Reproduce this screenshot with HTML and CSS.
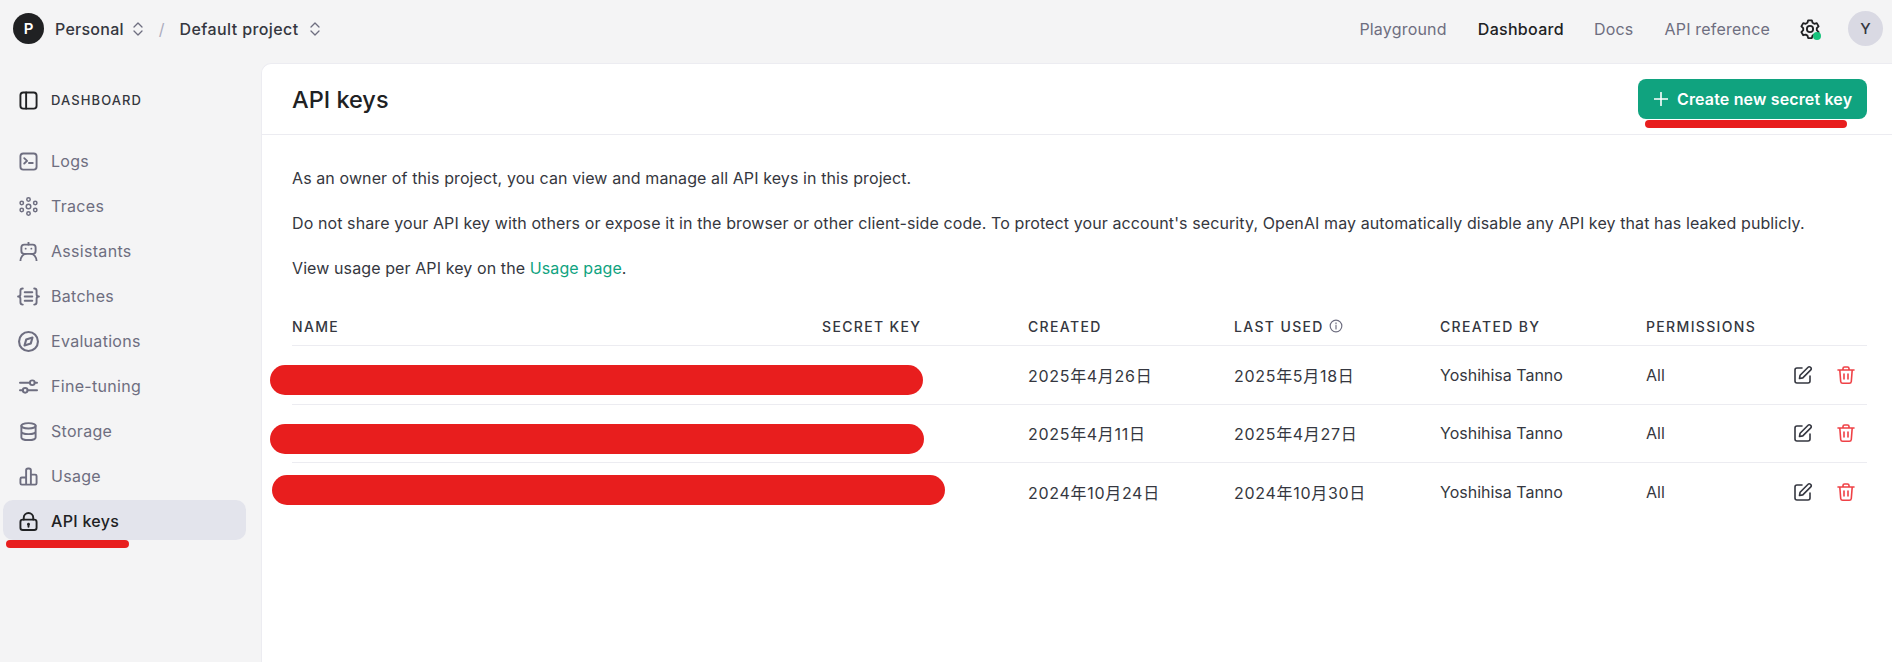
FILE: index.html
```html
<!DOCTYPE html>
<html lang="ja">
<head>
<meta charset="utf-8">
<title>API keys</title>
<link rel="stylesheet" href="styles.css">
</head>
<body>
<header class="topbar">
  <div class="crumbs">
    <span class="org-badge">P</span>
    <span class="crumb crumb-org">Personal</span>
    <svg class="updown" viewBox="0 0 12 18"><path d="M2 7l4-4 4 4M2 11l4 4 4-4"/></svg>
    <span class="slash">/</span>
    <span class="crumb">Default project</span>
    <svg class="updown" viewBox="0 0 12 18"><path d="M2 7l4-4 4 4M2 11l4 4 4-4"/></svg>
  </div>
  <nav class="topnav">
    <a class="toplink">Playground</a>
    <a class="toplink toplink-active">Dashboard</a>
    <a class="toplink">Docs</a>
    <a class="toplink">API reference</a>
    <span class="gear">
      <svg viewBox="0 0 24 24" class="gear-icon"><path d="M10 2.500h4l.8 2.700 1.900 1.100 2.700-.7 2 3.500-2 2v2.200l2 2-2 3.500-2.700-.7-1.900 1.100-.8 2.700h-4l-.8-2.700-1.900-1.100-2.700.7-2-3.500 2-2v-2.200l-2-2 2-3.500 2.700.7 1.900-1.100z"/><circle cx="12" cy="12" r="3.400"/></svg>
      <span class="gear-dot"></span>
    </span>
    <span class="user-badge">Y</span>
  </nav>
</header>
<div class="shell">
  <aside class="sidebar">
    <div class="side-title">
      <svg class="side-icon dark" viewBox="0 0 20 20"><rect x="1.500" y="1.500" width="17" height="17" rx="3"/><path d="M7.500 1.500v17"/></svg>
      <span>DASHBOARD</span>
    </div>
    <ul class="side-list">
      <li class="side-item"><svg class="side-icon" viewBox="0 0 20 20"><rect x="1.500" y="1.500" width="17" height="17" rx="3"/><path d="M5.500 6.500l3 2.800-3 2.800M10.500 11.500h4"/></svg>Logs</li>
      <li class="side-item"><svg class="side-icon thin" viewBox="0 0 20 20"><circle cx="10" cy="10" r="2.400"/><circle cx="10" cy="2.600" r="1.800"/><circle cx="10" cy="17.400" r="1.800"/><circle cx="2.900" cy="6.300" r="1.800"/><circle cx="17.100" cy="6.300" r="1.800"/><circle cx="2.900" cy="13.700" r="1.800"/><circle cx="17.100" cy="13.700" r="1.800"/></svg>Traces</li>
      <li class="side-item"><svg class="side-icon" viewBox="0 0 20 20"><rect x="2.500" y="2.800" width="15" height="9.700" rx="3"/><path d="M10 .5v2.300M1.500 20c0-4 3-7.500 5.500-7.500M18.500 20c0-4-3-7.500-5.500-7.500"/><circle class="solid" cx="7" cy="7" r="1"/><circle class="solid" cx="13" cy="7" r="1"/></svg>Assistants</li>
      <li class="side-item"><svg class="side-icon wide" viewBox="0 0 24 20"><path d="M6 1.500c-2 0-2.500 1-2.500 2.500v3.500c0 1.500-.8 2.500-2.500 2.500 1.700 0 2.500 1 2.500 2.500V16c0 1.500.5 2.500 2.500 2.500M18 1.500c2 0 2.500 1 2.500 2.500v3.500c0 1.500.8 2.500 2.500 2.500-1.700 0-2.500 1-2.500 2.500V16c0 1.500-.5 2.500-2.500 2.500M8 5.500h8M8 10h8M8 14.500h8"/></svg>Batches</li>
      <li class="side-item"><svg class="side-icon big" viewBox="0 0 20 20"><circle cx="10" cy="10" r="9"/><path d="M13.800 6.200l-1.600 5.600-6 2 1.600-5.600z"/></svg>Evaluations</li>
      <li class="side-item"><svg class="side-icon" viewBox="0 0 20 20"><path d="M1 6h10.500M16.500 6H19M1 14h3M9 14h10"/><circle cx="14" cy="6" r="2.500"/><circle cx="6.500" cy="14" r="2.500"/></svg>Fine-tuning</li>
      <li class="side-item"><svg class="side-icon" viewBox="0 0 20 20"><ellipse cx="10" cy="4" rx="7.500" ry="2.800"/><path d="M2.500 4v12.200c0 1.600 3.400 2.800 7.500 2.800s7.500-1.200 7.500-2.800V4M2.500 10c0 1.600 3.400 2.800 7.500 2.800s7.500-1.200 7.500-2.800"/></svg>Storage</li>
      <li class="side-item"><svg class="side-icon" viewBox="0 0 20 20"><path d="M7.500 18.500V3.500a2 2 0 0 1 2-2h1a2 2 0 0 1 2 2v15M12.500 8h4.500a1.500 1.500 0 0 1 1.500 1.500v7.500a1.500 1.500 0 0 1-1.500 1.500H3a1.500 1.500 0 0 1-1.500-1.500v-4.500A1.500 1.500 0 0 1 3 11h4.500"/></svg>Usage</li>
      <li class="side-item side-item-active"><svg class="side-icon dark" viewBox="0 0 20 20"><rect x="1.500" y="8" width="17" height="11" rx="2.500"/><path d="M5 8V6a5 5 0 0 1 10 0v2"/><circle class="solid" cx="10" cy="12.800" r="1.500"/><path d="M10 13.500v2"/></svg>API keys<span class="mark mark-nav"></span></li>
    </ul>
  </aside>
  <main class="panel">
    <div class="panel-head">
      <h1 class="title">API keys</h1>
      <button class="primary">
        <svg class="plus" viewBox="0 0 14 14"><path d="M7 .5v13M.5 7h13"/></svg>
        Create new secret key
        <span class="mark mark-btn"></span>
      </button>
    </div>
    <div class="panel-body">
      <p class="note">As an owner of this project, you can view and manage all API keys in this project.</p>
      <p class="note">Do not share your API key with others or expose it in the browser or other client-side code. To protect your account's security, OpenAI may automatically disable any API key that has leaked publicly.</p>
      <p class="note">View usage per API key on the <a class="link">Usage page</a>.</p>
      <div class="keys">
        <div class="row row-head">
          <span>NAME</span><span>SECRET KEY</span><span>CREATED</span>
          <span class="with-info">LAST USED <svg class="info" viewBox="0 0 12 12"><circle cx="6" cy="6" r="5"/><path d="M6 5.500v3M6 3.300v.8"/></svg></span>
          <span>CREATED BY</span><span>PERMISSIONS</span><span></span>
        </div>
        <div class="row">
          <span class="redacted"><span class="mark mark-a"></span></span>
          <span class="date">2025年4月26日</span><span class="date">2025年5月18日</span><span>Yoshihisa Tanno</span><span>All</span>
          <span class="acts">
            <svg class="act" viewBox="0 0 20 20"><path d="M9 3H4a2 2 0 0 0-2 2v11a2 2 0 0 0 2 2h11a2 2 0 0 0 2-2v-5M6.500 13.500l.6-3.300 8-8a1.600 1.600 0 0 1 2.300 0l.4.400a1.600 1.600 0 0 1 0 2.300l-8 8z"/></svg>
            <svg class="act act-del" viewBox="0 0 20 20"><path d="M2 5h16M7 5V3.500A1.500 1.500 0 0 1 8.500 2h3A1.500 1.500 0 0 1 13 3.500V5M3.800 5l.9 11.500a2 2 0 0 0 2 1.800h6.600a2 2 0 0 0 2-1.800L16.200 5M8 9v5M12 9v5"/></svg>
          </span>
        </div>
        <div class="row">
          <span class="redacted"><span class="mark mark-b"></span></span>
          <span class="date">2025年4月11日</span><span class="date">2025年4月27日</span><span>Yoshihisa Tanno</span><span>All</span>
          <span class="acts">
            <svg class="act" viewBox="0 0 20 20"><path d="M9 3H4a2 2 0 0 0-2 2v11a2 2 0 0 0 2 2h11a2 2 0 0 0 2-2v-5M6.500 13.500l.6-3.300 8-8a1.600 1.600 0 0 1 2.300 0l.4.400a1.600 1.600 0 0 1 0 2.300l-8 8z"/></svg>
            <svg class="act act-del" viewBox="0 0 20 20"><path d="M2 5h16M7 5V3.500A1.500 1.500 0 0 1 8.500 2h3A1.500 1.500 0 0 1 13 3.500V5M3.800 5l.9 11.500a2 2 0 0 0 2 1.800h6.600a2 2 0 0 0 2-1.800L16.200 5M8 9v5M12 9v5"/></svg>
          </span>
        </div>
        <div class="row">
          <span class="redacted"><span class="mark mark-c"></span></span>
          <span class="date">2024年10月24日</span><span class="date">2024年10月30日</span><span>Yoshihisa Tanno</span><span>All</span>
          <span class="acts">
            <svg class="act" viewBox="0 0 20 20"><path d="M9 3H4a2 2 0 0 0-2 2v11a2 2 0 0 0 2 2h11a2 2 0 0 0 2-2v-5M6.500 13.500l.6-3.300 8-8a1.600 1.600 0 0 1 2.300 0l.4.400a1.600 1.600 0 0 1 0 2.300l-8 8z"/></svg>
            <svg class="act act-del" viewBox="0 0 20 20"><path d="M2 5h16M7 5V3.500A1.500 1.500 0 0 1 8.500 2h3A1.500 1.500 0 0 1 13 3.500V5M3.800 5l.9 11.500a2 2 0 0 0 2 1.800h6.600a2 2 0 0 0 2-1.800L16.200 5M8 9v5M12 9v5"/></svg>
          </span>
        </div>
      </div>
    </div>
  </main>
</div>
</body>
</html>
```

FILE: styles.css
```css
* { box-sizing: border-box; }
html, body { height: 100%; }
body {
  margin: 0;
  background: #f4f4f5;
  color: #202123;
  font-family: Inter, "Noto Sans CJK JP", sans-serif;
  font-size: 16px;
  overflow: hidden;
  display: flex;
  flex-direction: column;
}
svg { fill: none; stroke: currentColor; stroke-linecap: round; stroke-linejoin: round; flex: none; }
.solid { fill: currentColor; stroke: none; }

.topbar {
  height: 63px;
  flex: none;
  display: flex;
  align-items: center;
  justify-content: space-between;
  padding: 0 9px 6px 13px;
}
.crumbs { display: flex; align-items: center; }
.org-badge {
  width: 31px; height: 31px; border-radius: 50%;
  background: #202123; color: #fff;
  display: flex; align-items: center; justify-content: center;
  font-weight: 600; font-size: 15px;
  margin-right: 11px;
}
.crumb { font-weight: 500; font-size: 16px; letter-spacing: .4px; color: #353740; }
.crumb-org { letter-spacing: .25px; }
.updown { width: 12px; height: 18px; stroke: #6e6e80; stroke-width: 1.300; margin-left: 10px; }
.crumb-org + .updown { margin-left: 8px; }
.slash { color: #acacbe; margin: 0 15px; font-size: 16px; }
.topnav { display: flex; align-items: center; }
.toplink { color: #6e6e80; font-size: 16px; letter-spacing: .2px; margin-right: 31px; }
.toplink-active { color: #202123; font-weight: 500; letter-spacing: .3px; margin-right: 30px; }
.gear { position: relative; width: 22px; height: 22px; margin: 0 27px 0 -2px; }
.gear-icon { width: 22px; height: 22px; stroke: #202123; stroke-width: 2; }
.gear-dot {
  position: absolute; right: 0; bottom: 0;
  width: 8px; height: 8px; border-radius: 50%;
  background: #19c37d;
}
.user-badge {
  width: 35px; height: 35px; border-radius: 50%;
  background: #d9d9e3; color: #353740;
  display: flex; align-items: center; justify-content: center;
  font-size: 15px; font-weight: 500;
}

.shell { flex: 1; display: flex; min-height: 0; }
.sidebar { width: 261px; flex: none; padding: 0 15px 0 3px; }
.side-title {
  display: flex; align-items: center; gap: 13px;
  height: 40px; margin-top: 17px; padding-left: 16px;
  font-size: 13px; font-weight: 500; letter-spacing: 1.100px; color: #353740;
}
.side-icon { width: 19px; height: 19px; stroke: #6e6e80; stroke-width: 2; color: #6e6e80; }
.side-icon.thin { stroke-width: 1.600; }
.side-icon.wide { width: 23px; margin: 0 -2px; }
.side-icon.big { width: 21px; height: 21px; margin: 0 -1px; }
.side-icon.dark { stroke: #202123; color: #202123; stroke-width: 2; }
.side-list { list-style: none; margin: 20px 0 0; padding: 0; display: flex; flex-direction: column; gap: 5px; }
.side-item {
  position: relative;
  display: flex; align-items: center; gap: 13px;
  height: 40px; padding: 2px 0 0 16px; border-radius: 10px;
  color: #6e6e80; font-size: 16px; letter-spacing: .3px;
}
.side-item-active { background: #e3e4ec; color: #202123; font-weight: 500; }

.panel {
  flex: 1; min-width: 0;
  background: #fff;
  border-top: 1px solid #ececf1; border-left: 1px solid #ececf1;
  border-top-left-radius: 10px;
}
.panel-head {
  height: 71px;
  display: flex; align-items: center; justify-content: space-between;
  padding: 0 25px 0 30px;
  border-bottom: 1px solid #ececf1;
}
.title { margin: 0; font-size: 23.500px; font-weight: 500; color: #202123; }
.primary {
  position: relative;
  display: flex; align-items: center; gap: 9px;
  height: 40px; width: 229px; padding: 0 0 0 16px;
  border: 0; border-radius: 8px;
  background: #10a37f; color: #fff;
  font: 600 16px Inter, sans-serif;
  letter-spacing: .15px;
}
.plus { width: 14px; height: 14px; stroke-width: 1.600; }

.panel-body { padding: 31px 25px 0 30px; }
.note { margin: 0 0 21px; font-size: 16px; letter-spacing: .1px; line-height: 24px; color: #353740; }
.link { color: #10a37f; }

.keys { margin-top: 28px; }
.row {
  position: relative;
  display: grid;
  grid-template-columns: 530px 206px 206px 206px 206px 1fr 72px;
  align-items: center;
  height: 58.500px;
  border-top: 1px solid #ececf1;
  color: #353740;
  font-size: 16px;
}
.row-head {
  height: 37px;
  padding-bottom: 1px;
  border-top: 0;
  font-size: 14px; font-weight: 500; letter-spacing: 1.350px;
}
.redacted { grid-column: span 2; }
.date { letter-spacing: .7px; }
.with-info { display: flex; align-items: center; gap: 5px; }
.info { width: 14px; height: 14px; stroke: #6e6e80; stroke-width: 1; }
.acts { display: flex; align-items: center; justify-content: flex-end; gap: 23px; padding-right: 11px; }
.act { width: 20px; height: 20px; stroke: #353740; stroke-width: 1.600; }
.act-del { stroke: #ef4146; }

.mark { position: absolute; background: #e81e1e; border-radius: 15px; }
.mark-nav { left: 3px; top: 40px; width: 123px; height: 8px; border-radius: 4px; }
.mark-btn { left: 7px; top: 41px; width: 202px; height: 8px; border-radius: 4px; }
.mark-a { left: -22.500px; top: 19px; width: 653px; height: 30px; }
.mark-b { left: -22.500px; top: 19px; width: 654px; height: 30px; }
.mark-c { left: -20.500px; top: 12px; width: 673px; height: 30px; }
```
